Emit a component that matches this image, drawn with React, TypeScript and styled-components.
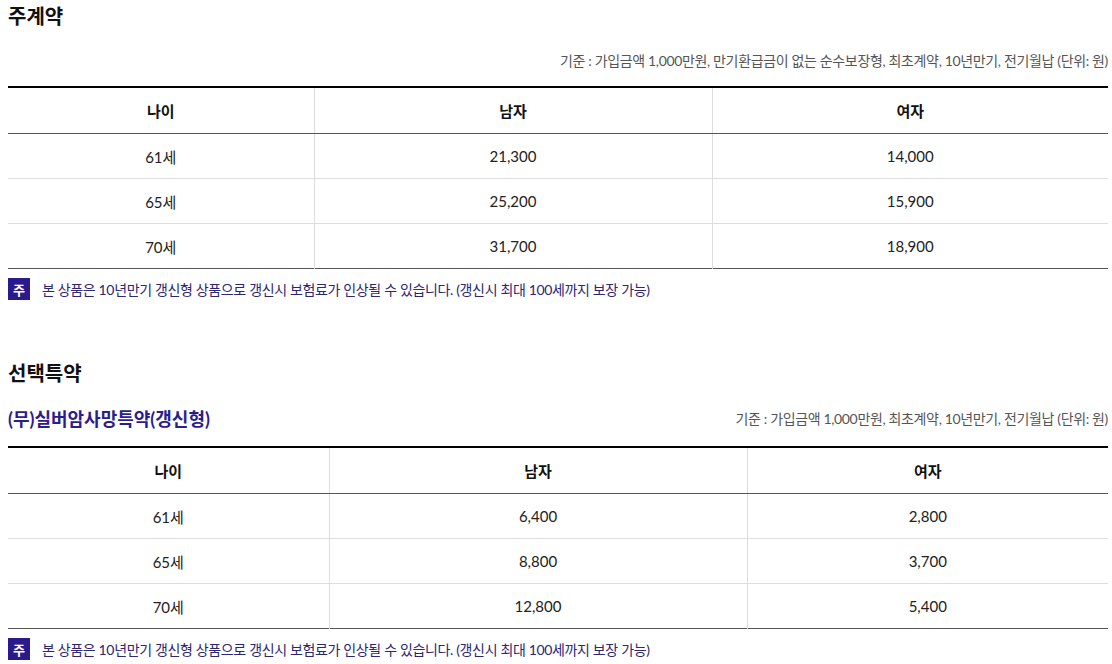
import React from "react";
import styled, { createGlobalStyle } from "styled-components";

const Global = createGlobalStyle`
  html, body { margin: 0; padding: 0; background: #fff; }
  body {
    font-family: Lato, "Noto Sans CJK KR", "Noto Sans", sans-serif;
    color: #111;
  }
`;

const Page = styled.div`
  padding: 0 4px 0 8px;
  width: 1100px;
`;

const Section = styled.section<{ $gap?: number }>`
  margin-top: ${(p) => p.$gap ?? 0}px;
`;

const Title = styled.h2`
  margin: 0;
  font-size: 20px;
  line-height: 32px;
  font-weight: 700;
  color: #111;
`;

const InfoRow = styled.div<{ $top: number; $bottom: number }>`
  display: flex;
  justify-content: space-between;
  align-items: center;
  margin-top: ${(p) => p.$top}px;
  margin-bottom: ${(p) => p.$bottom}px;
  min-height: 26px;
`;

const SubTitle = styled.h3`
  margin: 0;
  font-size: 18px;
  font-weight: 700;
  line-height: 26px;
  color: #2a1d8e;
`;

const Basis = styled.p`
  margin: 0 0 0 auto;
  font-size: 14px;
  line-height: 20px;
  color: #555;
  letter-spacing: -0.35px;
`;

const Table = styled.table`
  width: 100%;
  border-collapse: collapse;
  table-layout: fixed;
  border-top: 2px solid #000;
  border-bottom: 1px solid #555;
`;

const Th = styled.th`
  height: 45px;
  padding: 0;
  font-size: 15px;
  font-weight: 700;
  color: #111;
  text-align: center;
  border-bottom: 1px solid #555;
  border-left: 1px solid #ddd;
  &:first-child { border-left: none; }
`;

const Td = styled.td`
  height: 44px;
  padding: 0;
  font-size: 15px;
  color: #222;
  text-align: center;
  border-top: 1px solid #ddd;
  border-left: 1px solid #ddd;
  &:first-child { border-left: none; }
`;

const Notice = styled.div`
  display: flex;
  align-items: center;
  gap: 12px;
  margin-top: 9px;
`;

const Badge = styled.span`
  display: inline-flex;
  align-items: center;
  justify-content: center;
  width: 22px;
  height: 22px;
  background: #2a1a8c;
  color: #fff;
  font-size: 13px;
  font-weight: 700;
`;

const NoticeText = styled.span`
  font-size: 14px;
  color: #2d2670;
  letter-spacing: -0.35px;
`;

type Row = [string, string, string];

const main: Row[] = [
  ["61세", "21,300", "14,000"],
  ["65세", "25,200", "15,900"],
  ["70세", "31,700", "18,900"],
];

const rider: Row[] = [
  ["61세", "6,400", "2,800"],
  ["65세", "8,800", "3,700"],
  ["70세", "12,800", "5,400"],
];

function PremiumTable({ rows, widths }: { rows: Row[]; widths: number[] }) {
  return (
    <Table>
      <colgroup>
        {widths.map((w, i) => (
          <col key={i} style={{ width: `${w}px` }} />
        ))}
      </colgroup>
      <thead>
        <tr>
          <Th>나이</Th>
          <Th>남자</Th>
          <Th>여자</Th>
        </tr>
      </thead>
      <tbody>
        {rows.map((r) => (
          <tr key={r[0]}>
            {r.map((c, i) => (
              <Td key={i}>{c}</Td>
            ))}
          </tr>
        ))}
      </tbody>
    </Table>
  );
}

const NOTICE =
  "본 상품은 10년만기 갱신형 상품으로 갱신시 보험료가 인상될 수 있습니다. (갱신시 최대 100세까지 보장 가능)";

export default function App() {
  return (
    <>
      <Global />
      <Page>
        <Section>
          <Title>주계약</Title>
          <InfoRow $top={16} $bottom={12}>
            <Basis>
              기준 : 가입금액 1,000만원, 만기환급금이 없는 순수보장형, 최초계약, 10년만기, 전기월납 (단위: 원)
            </Basis>
          </InfoRow>
          <PremiumTable rows={main} widths={[306, 398, 396]} />
          <Notice>
            <Badge>주</Badge>
            <NoticeText>{NOTICE}</NoticeText>
          </Notice>
        </Section>
        <Section $gap={57}>
          <Title>선택특약</Title>
          <InfoRow $top={17} $bottom={14}>
            <SubTitle>(무)실버암사망특약(갱신형)</SubTitle>
            <Basis>기준 : 가입금액 1,000만원, 최초계약, 10년만기, 전기월납 (단위: 원)</Basis>
          </InfoRow>
          <PremiumTable rows={rider} widths={[321, 418, 361]} />
          <Notice>
            <Badge>주</Badge>
            <NoticeText>{NOTICE}</NoticeText>
          </Notice>
        </Section>
      </Page>
    </>
  );
}
